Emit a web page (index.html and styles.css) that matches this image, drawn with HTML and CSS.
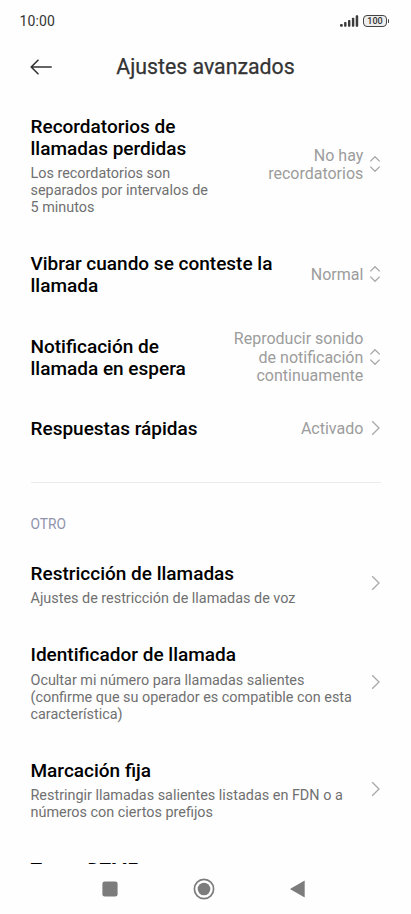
FILE: index.html
```html
<!doctype html>
<html lang="es">
<head>
<meta charset="UTF-8">
<meta name="viewport" content="width=device-width, initial-scale=1">
<title>Ajustes avanzados</title>
<link rel="stylesheet" href="styles.css">
</head>

<body>

<!-- shared icons -->
<svg class="sprite" width="0" height="0">
   <symbol id="updown" viewBox="0 0 12 18">
      <path d="M1.3 6.4 L6 1.7 L10.7 6.4 M1.3 11.6 L6 16.3 L10.7 11.6" />
   </symbol>
   <symbol id="chevron" viewBox="0 0 12 18">
      <path d="M3.2 2.3 L10 9 L3.2 15.7" />
   </symbol>
</svg>

<div class="screen">
   <div class="statusbar">
      <span class="clock">10:00</span>
      <svg class="signal" width="19" height="12" viewBox="0 0 19 12">
         <rect x="0" y="9" width="2.8" height="2.8" rx="1" />
         <rect x="4.1" y="7" width="2.4" height="4.8" rx=".7" />
         <rect x="8" y="5" width="2.4" height="6.8" rx=".7" />
         <rect x="11.9" y="2.8" width="2.4" height="9" rx=".7" />
         <rect x="15.7" y="0.2" width="2.5" height="11.6" rx=".7" />
      </svg>
      <div class="battery"><span>100</span></div>
   </div>

   <div class="header">
      <svg class="back" width="22" height="16" viewBox="0 0 22 16">
         <path d="M21.2 8 H1.2 M8 1.2 L1.2 8 L8 14.8" />
      </svg>
      <h1>Ajustes avanzados</h1>
   </div>

   <div class="list">
      <div class="row">
         <div class="label narrow">
            <h2>Recordatorios de llamadas perdidas</h2>
            <p>Los recordatorios son separados por intervalos de 5 minutos</p>
         </div>
         <div class="value">No hay<br>recordatorios</div>
         <svg class="icon"><use href="#updown" /></svg>
      </div>
      <div class="row">
         <div class="label">
            <h2>Vibrar cuando se conteste la llamada</h2>
         </div>
         <div class="value">Normal</div>
         <svg class="icon"><use href="#updown" /></svg>
      </div>
      <div class="row">
         <div class="label narrow">
            <h2>Notificación de<br>llamada en espera</h2>
         </div>
         <div class="value tall">Reproducir sonido<br>de notificación<br>continuamente</div>
         <svg class="icon"><use href="#updown" /></svg>
      </div>
      <div class="row">
         <div class="label">
            <h2>Respuestas rápidas</h2>
         </div>
         <div class="value">Activado</div>
         <svg class="icon"><use href="#chevron" /></svg>
      </div>

      <hr>
      <h3>OTRO</h3>

      <div class="row">
         <div class="label">
            <h2>Restricción de llamadas</h2>
            <p>Ajustes de restricción de llamadas de voz</p>
         </div>
         <svg class="icon"><use href="#chevron" /></svg>
      </div>
      <div class="row">
         <div class="label">
            <h2>Identificador de llamada</h2>
            <p>Ocultar mi número para llamadas salientes (confirme que su operador es compatible con esta característica)</p>
         </div>
         <svg class="icon"><use href="#chevron" /></svg>
      </div>
      <div class="row">
         <div class="label">
            <h2>Marcación fija</h2>
            <p>Restringir llamadas salientes listadas en FDN o a números con ciertos prefijos</p>
         </div>
         <svg class="icon"><use href="#chevron" /></svg>
      </div>
      <div class="row">
         <div class="label">
            <h2>Tonos DTMF</h2>
         </div>
      </div>
   </div>

   <div class="navbar">
      <svg width="16" height="16" viewBox="0 0 16 16"><rect x=".4" y=".4" width="15.2" height="15.2" rx="2.4" /></svg>
      <svg width="22" height="22" viewBox="0 0 22 22">
         <circle class="ring" cx="11" cy="11" r="9.6" />
         <circle cx="11" cy="11" r="6.3" />
      </svg>
      <svg width="16" height="18" viewBox="0 0 16 18"><path d="M14.7 .5 V17.5 L.8 9.6 Q0 9 .8 8.4 Z" /></svg>
   </div>
</div>

</body>
</html>
```
FILE: styles.css
```css
body, h1, h2, h3, p {
   margin: 0;
   padding: 0;
}

body {
   background: #fefefe;
   color: #000;
   font-family: Roboto, "Liberation Sans", sans-serif;
   overflow: hidden;
}

svg {
   display: block;
   flex: none;
}

.sprite {
   position: absolute;
}

.screen {
   display: flex;
   flex-direction: column;
   height: 914px;
}

.statusbar {
   display: flex;
   align-items: center;
   height: 41px;
   padding: 0 21px 0 19.5px;
}

.clock {
   flex: 1;
   font-size: 14px;
   letter-spacing: .1px;
   color: #333;
}

.signal {
   margin-right: 4px;
   fill: #3c3c3c;
}

.battery {
   position: relative;
   box-sizing: border-box;
   width: 24px;
   height: 12px;
   margin-right: 3px;
   border: 1.5px solid #444;
   border-radius: 4px;
   background: #eee;
   color: #333;
   font-size: 9px;
   font-weight: 500;
   line-height: 10px;
   text-align: center;
}

.battery:after {
   content: "";
   position: absolute;
   top: 3px;
   right: -3px;
   width: 1.5px;
   height: 4px;
   border-radius: 1px;
   background: #444;
}

.header {
   display: flex;
   align-items: center;
   height: 51px;
   padding: 0 30px;
}

.header h1 {
   flex: 1;
   margin-right: 22px;
   text-align: center;
   font-size: 21.3px;
   font-weight: 400;
   color: #333;
   -webkit-text-stroke: .25px #333;
}

.back {
   fill: none;
   stroke: #333;
   stroke-width: 1.6;
   stroke-linecap: round;
   stroke-linejoin: round;
}

.list {
   flex: 1;
   min-height: 0;
   overflow: hidden;
   padding: 4.9px 30.5px 0;
}

.row {
   display: flex;
   align-items: center;
   padding: 19px 0 19.5px;
}

.row:last-child {
   padding-top: 20px;
}

.label {
   flex: 1;
   padding-right: 13px;
}

.label.narrow {
   flex: none;
   width: 184px;
   padding-right: 0;
}

h2 {
   font-size: 19px;
   font-weight: 500;
   line-height: 22px;
}

.label p {
   margin: 5.2px 0 -1.2px;
   font-size: 14.4px;
   line-height: 17px;
   color: #707070;
}

.value {
   margin: 0 5.2px 0 auto;
   text-align: right;
   white-space: nowrap;
   font-size: 16px;
   line-height: 18.5px;
   color: #9c9c9c;
}

/* three lines are taller than the title beside them */
.value.tall {
   margin-top: -6px;
   margin-bottom: -6px;
}

.icon {
   width: 12px;
   height: 18px;
   margin: 0 0 2px auto;
   fill: none;
   stroke: #a8a8a8;
   stroke-width: 1.3;
}

.value + .icon {
   margin-left: 0;
}

hr {
   height: 1px;
   margin: 22px 0 33px;
   border: 0;
   background: #ebebeb;
}

h3 {
   margin-bottom: 12px;
   font-size: 13.8px;
   font-weight: 400;
   line-height: 16px;
   color: #8f93ab;
}

.navbar {
   display: flex;
   align-items: center;
   justify-content: space-between;
   box-sizing: border-box;
   height: 50px;
   padding: 0 105px 0 102px;
   fill: #7c7c7c;
}

.ring {
   fill: none;
   stroke: #7c7c7c;
   stroke-width: 1.7;
}
```
